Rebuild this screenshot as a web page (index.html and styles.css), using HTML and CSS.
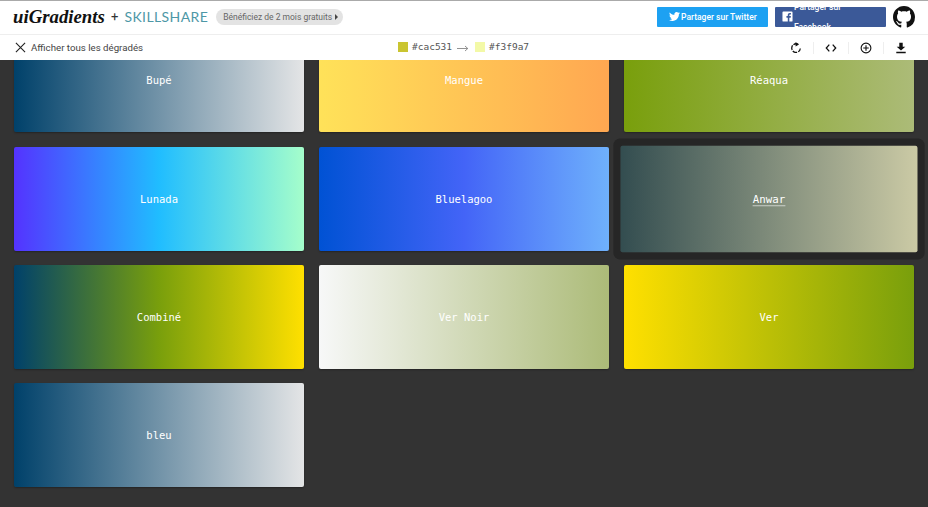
FILE: index.html
```html
<!DOCTYPE html>
<html lang="fr">
<head>
    <meta charset="UTF-8">
    <meta name="viewport" content="width=device-width, initial-scale=1.0">
    <title>uiGradients</title>
    <link rel="stylesheet" href="styles.css">
</head>
<body>

<div class="top">
    <header class="header">
        <span class="logo">uiGradients</span>
        <span class="plus">+</span>
        <span class="skillshare">SKILLSHARE</span>
        <span class="promo">Bénéficiez de 2 mois gratuits <i class="promo-arrow"></i></span>
        <div class="header-right">
            <a class="share share-twitter">
                <svg class="share-icon" viewBox="0 0 24 24"><path fill="#fff" d="M23.953 4.57a10 10 0 01-2.825.775 4.958 4.958 0 002.163-2.723c-.951.555-2.005.959-3.127 1.184a4.92 4.92 0 00-8.384 4.482C7.69 8.095 4.067 6.13 1.64 3.162a4.822 4.822 0 00-.666 2.475c0 1.71.87 3.213 2.188 4.096a4.904 4.904 0 01-2.228-.616v.06a4.923 4.923 0 003.946 4.827 4.996 4.996 0 01-2.212.085 4.936 4.936 0 004.604 3.417 9.867 9.867 0 01-6.102 2.105c-.39 0-.779-.023-1.17-.067a13.995 13.995 0 007.557 2.209c9.053 0 13.998-7.496 13.998-13.985 0-.21 0-.42-.015-.63A9.935 9.935 0 0024 4.59z"/></svg>
                <span>Partager sur Twitter</span>
            </a>
            <a class="share share-facebook">
                <svg class="share-icon" viewBox="0 0 24 24"><path fill="#fff" fill-rule="evenodd" d="M3 1h18a2 2 0 012 2v18a2 2 0 01-2 2h-5v-8.500h2.900l.5-3.400H16V9.200c0-1 .4-1.700 1.800-1.700h1.700V4.500c-.6-.1-1.500-.2-2.600-.2-2.600 0-4.300 1.600-4.300 4.400v2.400H9.700v3.400h2.900V23H3a2 2 0 01-2-2V3a2 2 0 012-2z"/></svg>
                <span class="share-wrap">Partager sur Facebook</span>
            </a>
            <svg class="github" viewBox="0 0 16 16"><path fill="#111" d="M8 0C3.58 0 0 3.58 0 8c0 3.540 2.290 6.530 5.470 7.590.4.070.55-.17.55-.38 0-.19-.01-.82-.01-1.490-2.010.37-2.530-.49-2.690-.94-.09-.23-.48-.94-.82-1.130-.28-.15-.68-.52-.01-.53.63-.01 1.080.58 1.230.82.72 1.210 1.870.87 2.330.66.07-.52.28-.87.51-1.070-1.780-.2-3.640-.89-3.640-3.950 0-.87.31-1.590.82-2.150-.08-.2-.36-1.020.08-2.120 0 0 .67-.21 2.200.82.64-.18 1.320-.27 2-.27.68 0 1.360.09 2 .27 1.530-1.040 2.200-.82 2.200-.82.44 1.100.16 1.920.08 2.120.51.56.82 1.270.82 2.150 0 3.070-1.870 3.750-3.650 3.950.29.25.54.73.54 1.480 0 1.070-.01 1.930-.01 2.200 0 .21.15.46.55.38A8.013 8.013 0 0016 8c0-4.420-3.580-8-8-8z"/></svg>
        </div>
    </header>

    <div class="toolbar">
        <div class="show-all">
            <svg class="close-icon" viewBox="0 0 12 12"><path d="M1 1l10 10M11 1L1 11" stroke="#222" stroke-width="1.200" fill="none"/></svg>
            <span>Afficher tous les dégradés</span>
        </div>
        <div class="colors">
            <i class="swatch swatch-from"></i>
            <span class="hex">#cac531</span>
            <svg class="arrow" viewBox="0 0 12 8"><path d="M0 4.500h10.500M8 2l2.800 2.500L8 7" stroke="#777" stroke-width=".8" fill="none"/></svg>
            <i class="swatch swatch-to"></i>
            <span class="hex">#f3f9a7</span>
        </div>
        <div class="actions">
            <span class="action">
                <svg viewBox="0 0 14 14"><path d="M9.500 2.800A5 5 0 1 0 12 7.500" stroke="#111" stroke-width="1.500" stroke-dasharray="5.500 1.300" fill="none"/><path d="M6.500 0l4 2.800-4 2.400z" fill="#111"/></svg>
            </span>
            <span class="action">
                <svg viewBox="0 0 14 14"><path d="M5 3L1.500 7 5 11M9 3l3.500 4L9 11" stroke="#111" stroke-width="1.500" fill="none"/></svg>
            </span>
            <span class="action">
                <svg viewBox="0 0 14 14"><circle cx="7" cy="7" r="5.700" stroke="#111" stroke-width="1.300" fill="none"/><path d="M7 3.800v6.400M3.800 7h6.400" stroke="#111" stroke-width="1.300"/></svg>
            </span>
            <span class="action">
                <svg viewBox="0 0 14 14"><path d="M5 1h4v4.500h3L7 10 2 5.500h3zM1.500 11.500h11V13h-11z" fill="#111"/></svg>
            </span>
        </div>
    </div>
</div>

<main class="grid">
    <div class="card bupe"><span>Bupé</span></div>
    <div class="card mangue"><span>Mangue</span></div>
    <div class="card reaqua"><span>Réaqua</span></div>
    <div class="card lunada"><span>Lunada</span></div>
    <div class="card bluelagoo"><span>Bluelagoo</span></div>
    <div class="card anwar"><span>Anwar</span></div>
    <div class="card combine"><span>Combiné</span></div>
    <div class="card ver-noir"><span>Ver Noir</span></div>
    <div class="card ver"><span>Ver</span></div>
    <div class="card bupe"><span>bleu</span></div>
</main>

</body>
</html>
```

FILE: styles.css
```css
* {
    box-sizing: border-box;
}
html, body {
    height: 100%;
}
body {
    margin: 0;
    background: #333;
    font-family: Roboto, Arial, sans-serif;
    color: #444;
    overflow: hidden;
}

/* top bars stay over the scrolled grid */
.top {
    position: fixed;
    top: 0;
    left: 0;
    right: 0;
    z-index: 2;
    background: #fff;
    border-top: 1px solid #aaa;
}
.header {
    height: 34px;
    display: flex;
    align-items: center;
    padding: 0 13px 2px;
    border-bottom: 1px solid #eee;
}
.logo {
    font-family: "Liberation Serif", serif;
    font-style: italic;
    font-weight: bold;
    font-size: 18.800px;
    color: #111;
    width: 91px;
    white-space: nowrap;
}
.plus {
    margin-left: 7px;
    font-size: 13px;
    color: #333;
}
.skillshare {
    margin-left: 6px;
    font-family: Lato, sans-serif;
    font-size: 14px;
    letter-spacing: 0.4px;
    color: #4d97a6;
}
.promo {
    margin-left: 8px;
    height: 16px;
    width: 127px;
    padding-left: 7px;
    border-radius: 8px;
    background: #e3e3e3;
    color: #666;
    font-size: 8.500px;
    line-height: 16px;
    white-space: nowrap;
}
.promo-arrow {
    display: inline-block;
    border-left: 3px solid #444;
    border-top: 3px solid transparent;
    border-bottom: 3px solid transparent;
    margin-left: 1px;
}
.header-right {
    margin-left: auto;
    display: flex;
    align-items: center;
}
.share {
    width: 111px;
    height: 20px;
    display: flex;
    align-items: center;
    padding-left: 12px;
    gap: 1px;
    color: #fff;
    font-size: 8.500px;
    font-weight: 500;
    border-radius: 1px;
    overflow: hidden;
}
.share-twitter {
    background: #1da1f2;
    margin-right: 7px;
}
.share-facebook {
    background: #3b5998;
    padding-left: 7px;
    margin-right: 7px;
}
.share-icon {
    width: 11px;
    height: 11px;
    flex: none;
}
.share-wrap {
    width: 60px;
    line-height: 20px;
}
.github {
    width: 22px;
    height: 22px;
}
.toolbar {
    height: 25px;
    display: flex;
    align-items: center;
    justify-content: space-between;
    padding: 0 10px 0 15px;
    position: relative;
}
.show-all {
    display: flex;
    align-items: center;
    gap: 5px;
    font-size: 9.700px;
    color: #444;
}
.close-icon {
    width: 11px;
    height: 11px;
}
.colors {
    position: absolute;
    left: 398px;
    top: 6px;
    display: flex;
    align-items: center;
}
.swatch {
    width: 10px;
    height: 10px;
}
.swatch-from {
    background: #cac531;
}
.swatch-to {
    background: #f3f9a7;
}
.hex {
    margin-left: 4px;
    font-family: "DejaVu Sans Mono", monospace;
    font-size: 9.500px;
    color: #555;
}
.arrow {
    width: 12px;
    height: 8px;
    margin: 3px 6px 0 5px;
}
.actions {
    display: flex;
    align-items: center;
}
.action {
    width: 35px;
    height: 12px;
    display: flex;
    align-items: center;
    justify-content: center;
    border-left: 1px solid #eee;
}
.action:first-child {
    border-left: none;
}
.action svg {
    width: 12px;
    height: 12px;
}

/* gradient cards */
.grid {
    display: grid;
    grid-template-columns: repeat(3, 290px);
    grid-auto-rows: 104px;
    column-gap: 15px;
    row-gap: 14.400px;
    padding: 28.200px 14px 0;
}
.card {
    display: flex;
    align-items: center;
    justify-content: center;
    border-radius: 2px;
    box-shadow: 0 1px 2px rgba(0, 0, 0, 0.3);
    color: #fff;
    font-family: "DejaVu Sans Mono", monospace;
    font-size: 10.500px;
}
.bupe { background: linear-gradient(to right, #00416a, #e4e5e6); }
.mangue { background: linear-gradient(to right, #ffe259, #ffa751); }
.reaqua { background: linear-gradient(to right, #799f0c, #acbb78); }
.lunada { background: linear-gradient(to right, #5433ff, #20bdff, #a5fecb); }
.bluelagoo { background: linear-gradient(to right, #0052d4, #4364f7, #6fb1fc); }
.combine { background: linear-gradient(to right, #00416a, #799f0c, #ffe000); }
.ver-noir { background: linear-gradient(to right, #f7f8f8, #acbb78); }
.ver { background: linear-gradient(to right, #ffe000, #799f0c); }
.anwar {
    background: linear-gradient(to right, #334d50, #cbcaa5);
    transform: scale(1.024);
    box-shadow: 0 0 0 7px #262626;
}
.anwar span {
    border-bottom: 1px solid rgba(255, 255, 255, 0.6);
}
```
